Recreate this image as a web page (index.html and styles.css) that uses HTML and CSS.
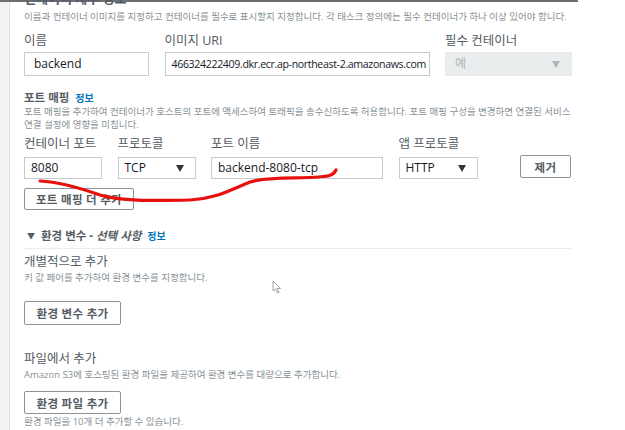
FILE: index.html
```html
<!DOCTYPE html>
<html lang="ko">
<head>
<meta charset="UTF-8">
<title>컨테이너 세부 정보</title>
<link rel="stylesheet" href="styles.css">
</head>
<body>
<div class="page">
    <div class="side"></div>
    <div class="panel">
        <div class="topbar"></div>
        <h2 class="title">컨테이너 세부 정보</h2>
        <p class="desc">이름과 컨테이너 이미지를 지정하고 컨테이너를 필수로 표시할지 지정합니다. 각 태스크 정의에는 필수 컨테이너가 하나 이상 있어야 합니다.</p>

        <div class="row-main">
            <div>
                <label>이름</label>
                <div class="field">backend</div>
            </div>
            <div>
                <label>이미지 URI</label>
                <div class="field uri">466324222409.dkr.ecr.ap-northeast-2.amazonaws.com</div>
            </div>
            <div>
                <label>필수 컨테이너</label>
                <div class="field select disabled">예<span class="arrow"></span></div>
            </div>
        </div>

        <h3 class="sub">포트 매핑 <a class="info">정보</a></h3>
        <p class="desc desc-2">포트 매핑을 추가하여 컨테이너가 호스트의 포트에 액세스하여 트래픽을 송수신하도록 허용합니다. 포트 매핑 구성을 변경하면 연결된 서비스<br>연결 설정에 영향을 미칩니다.</p>

        <div class="row-port">
            <div>
                <label>컨테이너 포트</label>
                <div class="field small">8080</div>
            </div>
            <div>
                <label>프로토콜</label>
                <div class="field small select">TCP<span class="arrow"></span></div>
            </div>
            <div>
                <label>포트 이름</label>
                <div class="field small">backend-8080-tcp</div>
            </div>
            <div>
                <label>앱 프로토콜</label>
                <div class="field small select">HTTP<span class="arrow"></span></div>
            </div>
            <div class="remove-cell">
                <button class="btn btn-remove">제거</button>
            </div>
        </div>

        <button class="btn btn-more">포트 매핑 더 추가</button>

        <div class="env-head">
            <span class="caret">▼</span> 환경 변수 - <em>선택 사항</em> <a class="info">정보</a>
        </div>

        <div class="group">
            <div class="group-title">개별적으로 추가</div>
            <div class="hint">키 값 페어를 추가하여 환경 변수를 지정합니다.</div>
            <button class="btn btn-env">환경 변수 추가</button>
        </div>

        <div class="group">
            <div class="group-title">파일에서 추가</div>
            <div class="hint">Amazon S3에 호스팅된 환경 파일을 제공하여 환경 변수를 대량으로 추가합니다.</div>
            <button class="btn btn-env btn-file">환경 파일 추가</button>
            <div class="hint hint-last">환경 파일을 10개 더 추가할 수 있습니다.</div>
        </div>
    </div>
</div>

<!-- 빨간 펜 표시 -->
<svg class="scribble" width="625" height="430" viewBox="0 0 625 430">
    <path d="M40 181 C60 182 80 188 100 195 C120 201 150 201 190 200 C215 199 230 190 250 182 C270 176 300 179 318 177 C328 176 333 176 336 170" fill="none" stroke="#e8100c" stroke-width="3.2" stroke-linecap="round"/>
</svg>

<svg class="cursor" width="10" height="14" viewBox="0 0 10 14">
    <path d="M1 1 L1 11 L3.5 9 L5.5 13 L7 12.3 L5 8.5 L8.5 8.5 Z" fill="#fff" stroke="#9a9a9a" stroke-width="0.9"/>
</svg>
</body>
</html>
```

FILE: styles.css
```css
body {
    margin: 0;
    background: #fff;
    font-family: "Open Sans", "Noto Sans CJK KR", sans-serif;
    color: #16191f;
    overflow: hidden;
}
.page {
    display: flex;
    height: 430px;
    position: relative;
}
.side {
    width: 9px;
    background: #f2f3f3;
    border-right: 1px solid #dfe1e2;
    flex-shrink: 0;
}
.panel {
    width: 551px;
    padding-left: 14px;
    position: relative;
}
.topbar {
    height: 2px;
    background: #6b6f73;
    margin-right: -3px;
    margin-left: -24px;
}
.title {
    margin: -12px 0 0 0;
    font-size: 13px;
    line-height: 16px;
    font-weight: bold;
    color: #545b64;
}
.desc {
    margin: 4px 0 0 0;
    font-size: 9.5px;
    line-height: 14px;
    color: #879196;
    white-space: nowrap;
}
label {
    display: block;
    font-size: 12.5px;
    line-height: 16px;
    color: #545b64;
    margin-bottom: 3px;
}
.row-main {
    display: grid;
    grid-template-columns: 125px 265px 127px;
    column-gap: 15.5px;
    margin-top: 9px;
}
.field {
    height: 24px;
    box-sizing: border-box;
    border: 1px solid #c6cbcd;
    padding: 0 9px;
    font-size: 12px;
    line-height: 22px;
    color: #16191f;
    position: relative;
    white-space: nowrap;
    overflow: hidden;
}
.field.uri {
    padding: 0 6px;
    font-size: 10.6px;
    letter-spacing: -0.35px;
}
.field.small {
    height: 22px;
    line-height: 20px;
    padding: 0 6px;
}
.select .arrow {
    position: absolute;
    right: 11px;
    top: 50%;
    margin-top: -3px;
    border-left: 4.5px solid transparent;
    border-right: 4.5px solid transparent;
    border-top: 7px solid #333;
}
.field.disabled {
    background: #eaeded;
    border-color: #eaeded;
    color: #aab7b8;
}
.field.disabled .arrow {
    border-top-color: #aab7b8;
}
.sub {
    margin: 14px 0 0 0;
    font-size: 11.5px;
    line-height: 16px;
    font-weight: bold;
    color: #545b64;
}
.info {
    color: #0073bb;
    font-size: 10px;
    font-weight: bold;
    margin-left: 3px;
}
.desc-2 {
    margin-top: -1px;
    line-height: 13px;
}
.row-port {
    display: grid;
    grid-template-columns: 78px 78px 172px 79px 1fr;
    column-gap: 15.5px;
    margin-top: 5px;
}
.row-port label {
    margin-bottom: 5px;
}
.remove-cell {
    padding-top: 19px;
}
.btn {
    display: block;
    box-sizing: border-box;
    background: #fff;
    border: 1px solid #8d9396;
    border-radius: 2px;
    font-family: "Open Sans", "Noto Sans CJK KR", sans-serif;
    font-size: 11.5px;
    font-weight: bold;
    color: #545b64;
    padding: 0;
    letter-spacing: 0.3px;
}
.btn-remove {
    width: 51px;
    height: 23px;
    margin-left: 27px;
}
.btn-more {
    width: 110px;
    height: 22px;
    margin-top: 9px;
}
.env-head {
    margin-top: 18px;
    padding: 0 0 3px 3px;
    border-bottom: 1px solid #eaeded;
    font-size: 11.5px;
    line-height: 16px;
    font-weight: bold;
    color: #545b64;
    width: 545px;
}
.caret {
    font-size: 8px;
    margin-right: 3px;
    position: relative;
    top: -1px;
}
.env-head em {
    font-style: italic;
}
.group {
    margin-top: 5px;
}
.group-title {
    font-size: 12.5px;
    line-height: 16px;
    color: #545b64;
}
.hint {
    font-size: 9.5px;
    line-height: 14px;
    color: #879196;
    margin-top: 1px;
}
.btn-env {
    width: 97px;
    height: 24px;
    margin-top: 16px;
}
.btn-file {
    height: 23px;
    margin-top: 9px;
}
.group + .group {
    margin-top: 26px;
}
.hint-last {
    margin-top: 1px;
}
.scribble {
    position: absolute;
    left: 0;
    top: 0;
    pointer-events: none;
}
.cursor {
    position: absolute;
    left: 272px;
    top: 280px;
}
```
